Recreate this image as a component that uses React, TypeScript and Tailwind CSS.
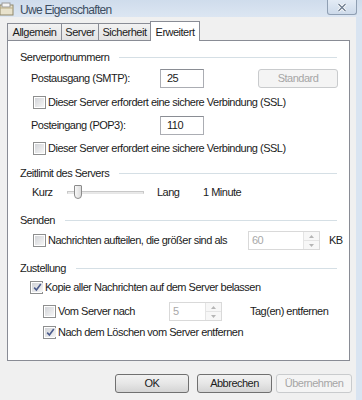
import React from 'react';

function Check({ checked = false }: { checked?: boolean }) {
  return (
    <span className="w-[13px] h-[13px] shrink-0 border border-[#8e8f8f] bg-white p-px flex">
      <span className="flex-1 flex items-center justify-center bg-gradient-to-br from-[#d2d4d8] to-[#f6f6f6]">
        {checked && (
          <svg width="11" height="11" viewBox="0 0 11 11">
            <path d="M2.2 5.6 L4.4 8 L8.8 2" fill="none" stroke="#4b5b8c" strokeWidth="1.6" />
          </svg>
        )}
      </span>
    </span>
  );
}

function SectionHead({ label }: { label: string }) {
  return (
    <div className="h-4 flex items-center pl-3 pr-3 gap-[10px]">
      <span>{label}</span>
      <span className="flex-1 h-px bg-[#d5dfe5]" />
    </div>
  );
}

function Field({ value, w }: { value: string; w: string }) {
  return (
    <div className={`${w} h-[19px] border border-[#abadb3] border-t-[#8a8d94] bg-white flex items-center px-[6px]`}>
      {value}
    </div>
  );
}

function Spinner({ value, w }: { value: string; w: string }) {
  return (
    <div className={`${w} h-[19px] border border-[#d9d9d9] bg-white flex items-stretch text-[#a8a8a8]`}>
      <span className="flex-1 flex items-center pl-[3px]">{value}</span>
      <span className="w-4 flex flex-col border-l border-[#e4e4e4]">
        <span className="flex-1 flex items-center justify-center border-b border-[#e4e4e4] bg-[#f7f7f7]">
          <svg width="5" height="3" viewBox="0 0 5 3"><path d="M0 3 L2.5 0 L5 3Z" fill="#b5b5b5" /></svg>
        </span>
        <span className="flex-1 flex items-center justify-center bg-[#f7f7f7]">
          <svg width="5" height="3" viewBox="0 0 5 3"><path d="M0 0 L2.5 3 L5 0Z" fill="#b5b5b5" /></svg>
        </span>
      </span>
    </div>
  );
}

function Button({ label, disabled = false, w }: { label: string; disabled?: boolean; w: string }) {
  return disabled ? (
    <div className={`${w} h-[19px] rounded-[3px] border border-[#c9cbcd] bg-[#f4f4f4] text-[#a6a6a6] flex items-center justify-center`}>
      {label}
    </div>
  ) : (
    <div className={`${w} h-[19px] rounded-[3px] border border-[#707070] bg-gradient-to-b from-[#f2f2f2] via-[#e6e6e6] to-[#d4d4d4] flex items-center justify-center`}>
      {label}
    </div>
  );
}

export default function App() {
  const tabs = [
    { label: 'Allgemein', w: 'w-[55px]' },
    { label: 'Server', w: 'w-[38px]' },
    { label: 'Sicherheit', w: 'w-[53px]' },
  ];

  return (
    <div className="w-[362px] h-[400px] flex flex-col overflow-hidden bg-[#d9e4f1] text-[11px] text-[#1b1b1b] font-['Liberation_Sans',Arial,sans-serif] tracking-[-0.5px]">
      {/* title bar */}
      <div className="h-[17px] shrink-0 flex items-start bg-gradient-to-b from-[#cfdcec] to-[#dce6f2]">
        <svg width="16" height="15" viewBox="0 0 16 15" className="mt-[2px]">
          <rect x="0" y="3" width="13" height="10" fill="#e8e2cc" stroke="#8f876b" />
          <rect x="2" y="1" width="8" height="4" fill="#f5f5f5" stroke="#9a9a9a" />
          <path d="M0 6 L13 6" stroke="#b8ac84" />
        </svg>
        <span className="ml-[4px] mt-[1px] text-[12px] text-[#3c4d61] tracking-[-0.7px]">Uwe Eigenschaften</span>
        <div className="ml-auto mr-[5px] w-[30px] h-[15px] rounded-b-[3px] border border-t-0 border-[#8f9fb3] bg-gradient-to-b from-[#e3ebf5] to-[#cddaea] flex items-center justify-center">
          <svg width="10" height="9" viewBox="0 0 10 9">
            <path d="M1.5 1 L8.5 8 M8.5 1 L1.5 8" stroke="#ffffff" strokeWidth="3" />
            <path d="M1.5 1 L8.5 8 M8.5 1 L1.5 8" stroke="#6d7c90" strokeWidth="1.3" />
          </svg>
        </div>
      </div>

      <div className="flex-1 flex">
        <div className="w-[356px] bg-[#f0f0f0] flex flex-col">
          {/* tabs */}
          <div className="h-[23px] flex items-end pl-[7px]">
            {tabs.map((t) => (
              <div
                key={t.label}
                className={`${t.w} h-[17px] -mr-px border border-b-0 border-[#898c95] bg-gradient-to-b from-[#f2f2f2] to-[#e3e3e3] flex items-center justify-center`}
              >
                {t.label}
              </div>
            ))}
            <div className="w-[50px] h-[20px] border border-b-0 border-[#898c95] bg-white flex items-start justify-center pt-[2px] -mb-px relative z-10">
              Erweitert
            </div>
          </div>

          {/* panel */}
          <div className="ml-[7px] w-[343px] h-[321px] border border-[#898c95] bg-white flex flex-col">
            <div className="mt-2">
              <SectionHead label="Serverportnummern" />
            </div>

            <div className="mt-1 h-[19px] flex items-center">
              <span className="ml-[23px] w-[129px]">Postausgang (SMTP):</span>
              <Field value="25" w="w-[44px]" />
              <span className="ml-[54px]">
                <Button label="Standard" disabled w="w-[80px]" />
              </span>
            </div>

            <div className="mt-[6px] h-4 flex items-center ml-[25px] gap-[2px]">
              <Check />
              <span>Dieser Server erfordert eine sichere Verbindung (SSL)</span>
            </div>

            <div className="mt-[6px] h-[19px] flex items-center">
              <span className="ml-[23px] w-[129px]">Posteingang (POP3):</span>
              <Field value="110" w="w-[44px]" />
            </div>

            <div className="mt-[5px] h-4 flex items-center ml-[25px] gap-[2px]">
              <Check />
              <span>Dieser Server erfordert eine sichere Verbindung (SSL)</span>
            </div>

            <div className="mt-[9px]">
              <SectionHead label="Zeitlimit des Servers" />
            </div>

            <div className="mt-[3px] h-4 flex items-center">
              <span className="ml-[24px] w-[35px]">Kurz</span>
              <div className="relative w-[77px] h-4 flex items-center">
                <div className="w-full h-[3px] border border-[#c8c8c8] border-b-[#e6e6e6] bg-[#e9e9e9]" />
                <div className="absolute left-[7px] top-[1px] w-[8px] h-[14px] rounded-b-[4px] rounded-t-[1px] border border-[#8b8b8b] bg-gradient-to-r from-[#f7f7f7] to-[#dcdcdc]" />
              </div>
              <span className="ml-[13px] w-[46px]">Lang</span>
              <span>1 Minute</span>
            </div>

            <div className="mt-3">
              <SectionHead label="Senden" />
            </div>

            <div className="mt-[3px] h-[19px] flex items-center">
              <span className="ml-[25px] flex items-center gap-[2px] w-[215px]">
                <Check />
                <span>Nachrichten aufteilen, die größer sind als</span>
              </span>
              <Spinner value="60" w="w-[72px]" />
              <span className="ml-[9px]">KB</span>
            </div>

            <div className="mt-[10px]">
              <SectionHead label="Zustellung" />
            </div>

            <div className="mt-[3px] h-4 flex items-center ml-[22px] gap-[2px]">
              <Check checked />
              <span>Kopie aller Nachrichten auf dem Server belassen</span>
            </div>

            <div className="mt-[7px] h-[19px] flex items-center">
              <span className="ml-[35px] flex items-center gap-[2px] w-[126px]">
                <Check />
                <span>Vom Server nach</span>
              </span>
              <Spinner value="5" w="w-[53px]" />
              <span className="ml-[28px]">Tag(en) entfernen</span>
            </div>

            <div className="mt-[3px] h-4 flex items-center ml-[35px] gap-[2px]">
              <Check checked />
              <span>Nach dem Löschen vom Server entfernen</span>
            </div>
          </div>

          {/* buttons */}
          <div className="mt-[13px] flex pl-[115px] gap-[8px]">
            <Button label="OK" w="w-[74px]" />
            <Button label="Abbrechen" w="w-[75px]" />
            <span className="-ml-1">
              <Button label="Übernehmen" disabled w="w-[76px]" />
            </span>
          </div>
        </div>
        <div className="flex-1" />
      </div>
    </div>
  );
}
